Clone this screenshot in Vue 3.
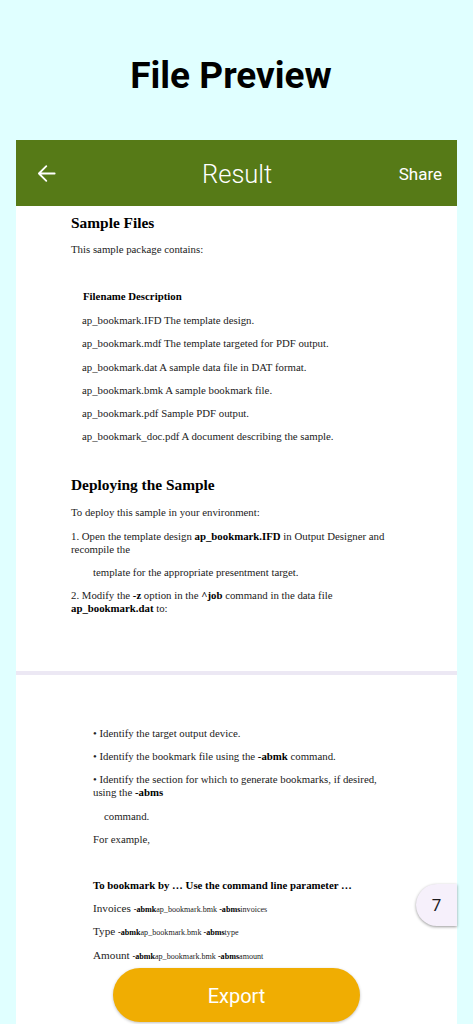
<script setup>
const rows = [
  'ap_bookmark.IFD The template design.',
  'ap_bookmark.mdf The template targeted for PDF output.',
  'ap_bookmark.dat A sample data file in DAT format.',
  'ap_bookmark.bmk A sample bookmark file.',
  'ap_bookmark.pdf Sample PDF output.',
  'ap_bookmark_doc.pdf A document describing the sample.',
]
const params = [
  { label: 'Invoices', value: 'invoices' },
  { label: 'Type', value: 'type' },
  { label: 'Amount', value: 'amount' },
]
</script>

<template>
  <div class="screen">
    <h1 class="title">File Preview</h1>
    <main class="frame">
      <header class="bar">
        <button class="back" aria-label="Back">
          <svg width="20" height="20" viewBox="0 0 20 20" fill="none" stroke="#fff" stroke-width="1.9" stroke-linecap="round" stroke-linejoin="round">
            <path d="M18.6 10H2M9.8 2.2 2 10l7.8 7.8" />
          </svg>
        </button>
        <span class="bar-title">Result</span>
        <span class="share">Share</span>
      </header>

      <section class="page first">
        <h2>Sample Files</h2>
        <p class="intro">This sample package contains:</p>
        <div class="table">
          <p class="table-head"><b>Filename Description</b></p>
          <p v-for="row in rows" :key="row">{{ row }}</p>
        </div>
        <h2 class="second-head">Deploying the Sample</h2>
        <p>To deploy this sample in your environment:</p>
        <p>1. Open the template design <b>ap_bookmark.IFD</b> in Output Designer and recompile the</p>
        <p class="indent">template for the appropriate presentment target.</p>
        <p>2. Modify the <b>-z</b> option in the <b>^job</b> command in the data file <b>ap_bookmark.dat</b> to:</p>
      </section>

      <section class="page second">
        <p>• Identify the target output device.</p>
        <p>• Identify the bookmark file using the <b>-abmk</b> command.</p>
        <p>• Identify the section for which to generate bookmarks, if desired, using the <b>-abms</b></p>
        <p class="cmd">command.</p>
        <p>For example,</p>
        <p class="to"><b>To bookmark by … Use the command line parameter …</b></p>
        <p v-for="p in params" :key="p.value" class="param">
          {{ p.label }} <small><b>-abmk</b>ap_bookmark.bmk <b>-abms</b>{{ p.value }}</small>
        </p>
      </section>
    </main>

    <div class="badge">7</div>
    <button class="export">Export</button>
  </div>
</template>

<style scoped>
.screen {
  position: relative;
  height: 1024px;
  overflow: hidden;
  background: #e0ffff;
  display: flex;
  flex-direction: column;
  font-family: "Liberation Serif", serif;
}
.title {
  margin: 0;
  height: 140px;
  flex: none;
  display: flex;
  align-items: center;
  justify-content: center;
  padding: 11px 11px 0 0;
  box-sizing: border-box;
  font: 700 37px Roboto, sans-serif;
  color: #000;
}
.frame {
  flex: 1;
  margin: 0 16px;
  min-height: 0;
  background: #fff;
  display: flex;
  flex-direction: column;
}
.bar {
  height: 66px;
  flex: none;
  background: #567a17;
  color: #fff;
  display: flex;
  align-items: center;
  justify-content: space-between;
  padding: 1px 15px 0 21px;
  box-sizing: border-box;
  position: relative;
  font-family: Roboto, sans-serif;
}
.back {
  border: 0;
  background: none;
  padding: 0;
  display: flex;
}
.back svg {
  width: 19px;
  height: 19px;
}
.bar-title {
  position: absolute;
  left: 186px;
  top: 19px;
  font-size: 25.5px;
  font-weight: 300;
}
.share {
  font-size: 17px;
}
.page {
  background: #fff;
  color: #222;
  font-size: 10.8px;
  line-height: 13px;
}
.page p {
  margin: 0 0 10.2px;
}
.page b {
  color: #000;
}
.page h2 {
  margin: 0;
  font-size: 15.4px;
  line-height: 18px;
  color: #000;
}
.first {
  height: 469px;
  flex: none;
  box-sizing: border-box;
  padding: 8px 72px 0 55px;
  border-bottom: 4px solid #ece8f4;
}
.intro {
  padding-top: 11px;
}
.table {
  padding-top: 24px;
  margin-left: 11px;
}
.page .table-head {
  margin: 0 0 11px 1px;
}
.page .second-head {
  padding-top: 23px;
  padding-bottom: 12px;
}
.indent {
  padding-left: 22px;
}
.second {
  flex: 1;
  padding: 52px 80px 0 77px;
}
.cmd {
  padding-left: 11px;
}
.to {
  padding-top: 23px;
}
.param {
  font-size: 11.2px;
}
.param small {
  font-size: 8.1px;
  line-height: 1;
}
.badge {
  position: absolute;
  right: 16px;
  top: 884px;
  width: 41px;
  height: 42px;
  box-sizing: border-box;
  background: #f6f0fb;
  border-radius: 21px 0 0 21px;
  box-shadow: 0 1px 3px rgba(0, 0, 0, .4);
  display: flex;
  align-items: center;
  justify-content: center;
  font: 400 17px Roboto, sans-serif;
  color: #1c1b1f;
}
.export {
  position: absolute;
  left: 113px;
  top: 968px;
  width: 247px;
  height: 54px;
  border: 0;
  padding: 2px 0 0;
  border-radius: 27px;
  background: #f0ad02;
  box-shadow: 0 1px 3px rgba(0, 0, 0, .25);
  color: #fff;
  font: 400 20px Roboto, sans-serif;
}
</style>
